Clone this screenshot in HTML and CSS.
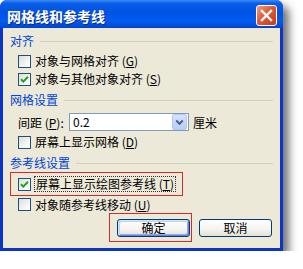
FILE: index.html
```html
<!DOCTYPE html>
<html>
<head>
<meta charset="utf-8">
<link rel="stylesheet" href="styles.css">
</head>
<body>
<div class="window">
  <div class="titlebar">
    <span class="title">网格线和参考线</span>
    <div class="close"><svg width="13" height="13" viewBox="0 0 13 13"><path d="M2 2 L11 11 M11 2 L2 11" stroke="#fff" stroke-width="2.4" stroke-linecap="square"/></svg></div>
  </div>
  <div class="client">
    <div class="legend"><span>对齐</span><i class="rule"></i></div>
    <div class="checks first">
      <div class="check"><span class="box"></span><span>对象与网格对齐 (<u>G</u>)</span></div>
      <div class="check"><span class="box on"><svg width="11" height="11" viewBox="0 0 11 11"><path d="M2 5.2 L4.3 7.6 L9 2.8" fill="none" stroke="#21A121" stroke-width="2"/></svg></span><span>对象与其他对象对齐 (<u>S</u>)</span></div>
    </div>
    <div class="legend sec"><span>网格设置</span><i class="rule"></i></div>
    <div class="spacing">
      <span class="lbl">间距 (<u>P</u>):</span>
      <div class="combo"><span class="val">0.2</span><span class="drop"><svg width="9" height="7" viewBox="0 0 9 7"><path d="M1.2 1.5 L4.5 4.8 L7.8 1.5" fill="none" stroke="#4D6185" stroke-width="2"/></svg></span></div>
      <span class="unit">厘米</span>
    </div>
    <div class="check cb3"><span class="box"></span><span>屏幕上显示网格 (<u>D</u>)</span></div>
    <div class="legend sec"><span>参考线设置</span><i class="rule"></i></div>
    <div class="redrow">
      <div class="check"><span class="box on"><svg width="11" height="11" viewBox="0 0 11 11"><path d="M2 5.2 L4.3 7.6 L9 2.8" fill="none" stroke="#21A121" stroke-width="2"/></svg></span><span class="focus">屏幕上显示绘图参考线 (<u>T</u>)</span></div>
    </div>
    <div class="check cb5"><span class="box"></span><span>对象随参考线移动 (<u>U</u>)</span></div>
    <div class="buttons">
      <div class="mark"><div class="btn default">确定</div></div>
      <div class="btn">取消</div>
    </div>
  </div>
</div>
</body>
</html>
```
FILE: styles.css
```css
html, body {
  margin: 0;
  padding: 0;
  background: #ffffff;
}
body {
  font-family: "Noto Sans CJK SC", "Liberation Sans", sans-serif;
  font-size: 12px;
  color: #000;
}
.window {
  width: 283px;
  height: 251px;
  display: flex;
  flex-direction: column;
  background: #0B35C8;
  border-radius: 7px 7px 0 0;
  box-shadow: 6px 6px 9px rgba(0, 0, 0, 0.55);
}
.titlebar {
  height: 28px;
  flex: none;
  display: flex;
  align-items: center;
  justify-content: space-between;
  padding: 0 6px 0 7px;
  border-radius: 7px 7px 0 0;
  background: linear-gradient(to bottom, #3C8CF4 0%, #0A5EE8 12%, #0052E2 45%, #005CF0 75%, #0044D2 100%);
}
.title {
  color: #fff;
  font-weight: bold;
  font-size: 14px;
  line-height: 16px;
  padding-top: 3px;
  text-shadow: 1px 1px 0 #0A2A8C;
}
.close {
  width: 19px;
  height: 19px;
  margin-top: 2px;
  border: 1px solid #fff;
  border-radius: 3px;
  display: flex;
  align-items: center;
  justify-content: center;
  background: linear-gradient(135deg, #F0A080 0%, #DE5A35 45%, #C43A18 100%);
}
.client {
  flex: 1;
  margin: 0 3px 3px;
  background: #ECE9D8;
  padding: 6px 7px 0;
  display: flex;
  flex-direction: column;
}
.legend {
  height: 14px;
  display: flex;
  align-items: center;
  gap: 6px;
  color: #0046D5;
  line-height: 14px;
}
.legend.sec {
  margin-top: 5px;
}
.rule {
  flex: 1;
  height: 1px;
  background: #D0D0BF;
}
.checks.first {
  margin-top: 4px;
}
.check {
  height: 18px;
  display: flex;
  align-items: center;
  padding-left: 8px;
  line-height: 14px;
}
.box {
  width: 11px;
  height: 11px;
  flex: none;
  border: 1px solid #1C5180;
  background: linear-gradient(135deg, #DCDCD7 0%, #F4F4F0 60%, #FFFFFF 100%);
  margin-right: 4px;
  display: flex;
  align-items: center;
  justify-content: center;
}
.spacing {
  margin-top: 5px;
  height: 20px;
  display: flex;
  align-items: center;
  padding-left: 8px;
}
.lbl {
  width: 51px;
}
.combo {
  width: 115px;
  height: 16px;
  border: 1px solid #7F9DB9;
  background: #fff;
  display: flex;
  align-items: center;
  justify-content: space-between;
  padding-left: 3px;
}
.val {
  line-height: 14px;
}
.drop {
  width: 13px;
  height: 14px;
  margin-right: 1px;
  border: 1px solid #B5C8F2;
  border-radius: 2px;
  background: linear-gradient(to bottom, #D6E2FC 0%, #BACDF6 100%);
  display: flex;
  align-items: center;
  justify-content: center;
}
.unit {
  margin-left: 4px;
}
.cb3 {
  margin-top: 1px;
}
.redrow {
  margin-top: 2px;
  width: 173px;
  height: 24px;
  box-sizing: border-box;
  border: 1px solid #D42A2A;
  display: flex;
  align-items: center;
  padding-left: 7px;
}
.redrow .check {
  padding-left: 0;
}
.focus {
  outline: 1px dotted #333;
  outline-offset: 0;
  padding: 0 1px;
}
.cb5 {
  height: 17px;
}
.buttons {
  height: 29px;
  display: flex;
  justify-content: flex-end;
  align-items: center;
  gap: 7px;
  padding-right: 1px;
}
.mark {
  height: 29px;
  box-sizing: border-box;
  border: 1px solid #D42A2A;
  padding: 5px 1px 0 7px;
}
.btn {
  width: 73px;
  height: 18px;
  box-sizing: border-box;
  border: 1px solid #003C74;
  border-radius: 3px;
  background: linear-gradient(to bottom, #FFFFFF 0%, #F4F3EE 60%, #E3E1D6 100%);
  display: flex;
  align-items: center;
  justify-content: center;
  line-height: 14px;
}
.btn.default {
  box-shadow: inset 1px 1px 0 #CEE7FF, inset -1px -1px 0 #6982EE, inset 2px 2px 0 #BCD4F6, inset -2px -2px 0 #89ADE4;
}
```
